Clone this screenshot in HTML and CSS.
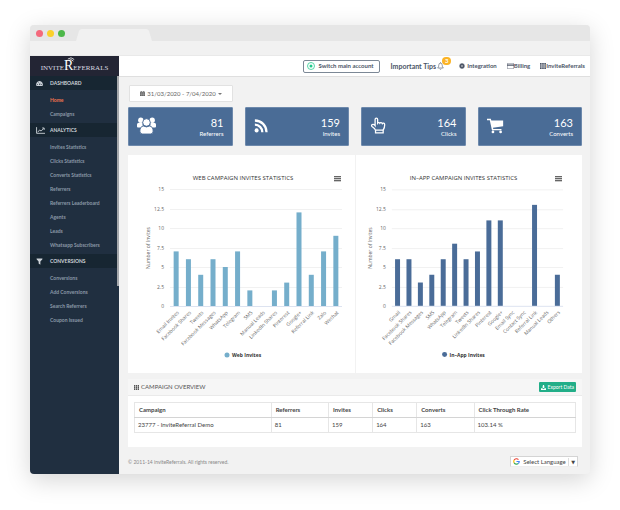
FILE: index.html
```html
<!DOCTYPE html>
<html lang="en">
<head>
<meta charset="utf-8">
<title>InviteReferrals</title>
<link rel="stylesheet" href="styles.css">
</head>
<body>
<div class="window">
  <div class="tabs">
    <span class="dot dot-red"></span><span class="dot dot-yellow"></span><span class="dot dot-green"></span>
    <svg class="tab" viewBox="0 0 76 12" preserveAspectRatio="none"><path d="M0 12 L3 2 Q4 0 6 0 H70 Q72 0 73 2 L76 12Z"/></svg>
  </div>
  <div class="toolbar"></div>
  <div class="app">
    <aside class="sidebar">
      <div class="logo">
        <span>INVITE</span><span class="logo-r">R<svg class="waves" viewBox="0 0 10 6"><path d="M1 2.5Q5-1 9 3M2.5 4.2Q5 1.7 8 5"/></svg></span><span>EFERRALS</span>
      </div>
      <nav class="menu">
        <h2 class="band"><svg class="icon" viewBox="0 0 14 12"><path d="M7 1a7 7 0 0 0-6 10h12A7 7 0 0 0 7 1z"/><path class="cut" d="M6.2 9l2-5 .4 5zM2.5 7h1.5v1.4H2.5zM4 3.8h1.3v1.4H4zM10 7h1.5v1.4H10z"/></svg>DASHBOARD</h2>
        <ul>
          <li><a class="active" href="#">Home</a></li>
          <li><a href="#">Campaigns</a></li>
        </ul>
        <h2 class="band"><svg class="icon icon-wide" viewBox="0 0 16 12"><path class="line" d="M1 0v11h15M3 9l3.5-4L9 7l5-5M11 1.5h3.5V5"/></svg>ANALYTICS</h2>
        <ul>
          <li><a href="#">Invites Statistics</a></li>
          <li><a href="#">Clicks Statistics</a></li>
          <li><a href="#">Converts Statistics</a></li>
          <li><a href="#">Referrers</a></li>
          <li><a href="#">Referrers Leaderboard</a></li>
          <li><a href="#">Agents</a></li>
          <li><a href="#">Leads</a></li>
          <li><a href="#">Whatsapp Subscribers</a></li>
        </ul>
        <h2 class="band"><svg class="icon" viewBox="0 0 12 12"><path d="M1 1h10v1.2L7.5 6v5.5l-3-2V6L1 2.200z"/></svg>CONVERSIONS</h2>
        <ul>
          <li><a href="#">Conversions</a></li>
          <li><a href="#">Add Conversions</a></li>
          <li><a href="#">Search Referrers</a></li>
          <li><a href="#">Coupon Issued</a></li>
        </ul>
        <span class="scrollbar"></span>
      </nav>
    </aside>
    <div class="main">
      <header class="topbar">
        <button class="switch" type="button"><svg viewBox="0 0 16 16"><circle class="ring" cx="8" cy="8" r="7"/><circle cx="8" cy="8" r="3"/></svg>Switch main account</button>
        <a class="tips" href="#">Important Tips<span class="bell"><svg viewBox="0 0 12 14"><path d="M1 10.500Q3 9 3 5.500Q3 2 6 2T9 5.500Q9 9 11 10.500zM6 2V.5M4.500 12q1.500 1.800 3 0"/></svg><span class="badge">3</span></span></a>
        <a class="link-integration" href="#"><svg class="small" viewBox="0 0 16 16"><circle class="gear" cx="8" cy="8" r="4"/><path class="teeth" d="M8 0v3M8 13v3M0 8h3M13 8h3M2.300 2.300l2.200 2.200M11.500 11.500l2.200 2.200M2.300 13.700l2.200-2.200M11.500 4.500l2.200-2.200"/></svg>Integration</a>
        <a class="link-billing" href="#"><svg class="card-icon" viewBox="0 0 14 12"><path class="card-line" d="M.5.5h13v11H.5z"/><path d="M0 3h14v2.500H0z"/></svg>Billing</a>
        <a href="#"><svg class="small" viewBox="0 0 12 12"><path d="M0 0h3.300v3.300H0zM4.300 0h3.300v3.300H4.300zM8.600 0h3.300v3.300H8.600zM0 4.300h3.300v3.300H0zM4.300 4.300h3.300v3.300H4.300zM8.600 4.300h3.300v3.300H8.600zM0 8.600h3.300v3.300H0zM4.300 8.600h3.300v3.300H4.300zM8.600 8.600h3.300v3.300H8.600z"/></svg>InviteReferrals</a>
      </header>
      <main class="content">
        <button class="date" type="button"><svg viewBox="0 0 12 12"><path d="M0 2h2V0h2v2h4V0h2v2h2v10H0z"/><path class="grid" d="M0 4.500h12M0 8h12M4 4v8M8 4v8"/></svg>31/03/2020 - 7/04/2020<i class="caret"></i></button>
        <section class="stats">
          <div class="stat"><svg viewBox="0 0 20 20"><circle cx="4" cy="4.500" r="2.800"/><circle cx="16" cy="4.500" r="2.800"/><path d="M0 11V9q0-2 2-2h4q-1 3 1 5H1q-1 0-1-1zM20 11V9q0-2-2-2h-4q1 3-1 5h6q1 0 1-1z"/><circle class="edge" cx="10" cy="6.800" r="4"/><path class="edge" d="M3 16q0-5 4-5.500 3 2 6 0 4 .5 4 5.500 0 3-3 3H6q-3 0-3-3z"/></svg><p><b>81</b>Referrers</p></div>
          <div class="stat"><svg class="icon-rss" viewBox="0 0 16 16"><circle cx="3" cy="13" r="2.300"/><path class="arc" d="M1 6.500A8.500 8.500 0 0 1 9.500 15M1 1.700A13.300 13.300 0 0 1 14.300 15"/></svg><p><b>159</b>Invites</p></div>
          <div class="stat"><svg class="icon-hand" viewBox="0 0 20 20"><path class="hand" d="M6.500 15.500v3.200h9v-3.200c1.200-2 1.800-4 1.800-6.500 0-1.800-2-2.300-2.800-1.200C14 6.500 12 6.300 11.500 7.300 11 6.400 9.400 6.300 9 7V2.800C9 .8 6 .8 6 2.800V10C4.500 8 1.800 8.300 1.800 10.200c0 1.500 3.200 2.300 4.700 5.300z"/><path class="hand" d="M6.500 15.500h9"/></svg><p><b>164</b>Clicks</p></div>
          <div class="stat"><svg class="icon-cart" viewBox="0 0 20 20"><path d="M0 2h4.500l.6 2H19v7L7 12.500l.4 1.500H17v1.700H5.800L3.300 3.700H0z"/><circle cx="7" cy="17.500" r="1.600"/><circle cx="16" cy="17.500" r="1.600"/></svg><p><b>163</b>Converts</p></div>
        </section>
        <section class="charts">
          <figure class="chart" id="web-chart"><button type="button" class="burger" aria-label="Chart menu"></button></figure>
          <figure class="chart" id="app-chart"><button type="button" class="burger" aria-label="Chart menu"></button></figure>
        </section>
        <section class="overview">
          <div class="overview-head">
            <h3><svg viewBox="0 0 12 12"><path d="M0 0h3v3.300H0zM4.500 0h3v3.300h-3zM9 0h3v3.300H9zM0 4.300h3v3.300H0zM4.500 4.300h3v3.300h-3zM9 4.300h3v3.300H9zM0 8.600h3V12H0zM4.500 8.600h3V12h-3zM9 8.600h3V12H9z"/></svg>CAMPAIGN OVERVIEW</h3>
            <button type="button" class="export"><svg viewBox="0 0 12 12"><path d="M4.500 0h3v4H10L6 8 2 4h2.500zM0 8h3l3 2 3-2h3v4H0z"/></svg>Export Data</button>
          </div>
          <div class="overview-body">
            <table>
              <colgroup><col class="c1"><col class="c2"><col class="c3"><col class="c4"><col class="c5"><col></colgroup>
              <thead><tr><th>Campaign</th><th>Referrers</th><th>Invites</th><th>Clicks</th><th>Converts</th><th>Click Through Rate</th></tr></thead>
              <tbody><tr><td>23777 - InviteReferral Demo</td><td>81</td><td>159</td><td>164</td><td>163</td><td>103.14 %</td></tr></tbody>
            </table>
          </div>
        </section>
        <footer class="footer">
          <span>© 2011-14 inviteReferrals. All rights reserved.</span>
          <label class="language"><svg viewBox="0 0 18 18"><path class="g-red" d="M3 5.500A7 7 0 0 1 14 4"/><path class="g-yellow" d="M3 5.500a7 7 0 0 0 0 7"/><path class="g-green" d="M3 12.500a7 7 0 0 0 10.500 1.800"/><path class="g-blue" d="M9 9h7q0 3.500-2.500 5.300"/></svg><select aria-label="Select Language"><option>Select Language</option></select><i class="arrow">▼</i></label>
        </footer>
      </main>
    </div>
  </div>
</div>
<script src="charts.js"></script>
</body>
</html>
```
FILE: styles.css
```css
* { box-sizing: border-box; }
body {
  margin: 0;
  min-height: 100vh;
  padding: 25px 30px 36px;
  display: flex;
  background: #fff;
  font: 6px/10px Lato, "Liberation Sans", sans-serif;
  color: #444;
}
h2, h3, p, ul, figure { margin: 0; padding: 0; font: inherit; }
ul { list-style: none; }
a { color: inherit; text-decoration: none; }
button, select { font: inherit; color: inherit; margin: 0; }
svg { fill: currentColor; flex: none; }

.window {
  flex: 1;
  min-width: 0;
  display: flex;
  flex-direction: column;
  border-radius: 4px;
  overflow: hidden;
  background: #f2f2f2;
  box-shadow: 0 6px 24px rgba(0, 0, 0, .17);
}
.tabs { display: flex; align-items: center; gap: 4px; height: 16px; padding-left: 6px; background: #e6e6e6; }
.dot { width: 7px; height: 7px; border-radius: 50%; }
.dot-red { background: #f4697c; }
.dot-yellow { background: #fbd02b; }
.dot-green { background: #4cb749; }
.tab { align-self: flex-end; width: 76px; height: 12px; margin-left: 7px; fill: #f1f1f1; }
.toolbar { height: 15px; background: #f1f1f1; border-bottom: 1px solid #e9e9e9; }
.app { flex: 1; display: flex; }

.sidebar { width: 89px; display: flex; flex-direction: column; background: #202f40; color: #8b99a7; }
.logo {
  display: flex;
  align-items: baseline;
  justify-content: center;
  height: 20px;
  background: #232534;
  color: #dcdce2;
  font: 7px/20px "Liberation Serif", serif;
}
.logo-r { position: relative; font-size: 14px; color: #fff; }
.waves { position: absolute; top: 1px; left: 3px; width: 8px; height: 5px; fill: none; stroke: #fff; stroke-width: 1; }
.menu { position: relative; flex: 1; font-size: 5px; font-weight: 700; }
.band {
  display: flex;
  align-items: center;
  height: 14px;
  padding-left: 6px;
  background: #172632;
  color: #ccd2d8;
}
.icon { width: 7px; height: 7px; margin-right: 7px; }
.icon-wide { width: 9px; margin-right: 5px; }
.cut { fill: #172632; }
.line { fill: none; stroke: currentColor; stroke-width: 1.6; }
.menu ul { padding: 3px 0 2px 20px; }
.menu li { line-height: 14px; }
.active { color: #f0734f; }
.scrollbar { position: absolute; top: 0; right: 0; width: 2px; height: 210px; background: #a6a8ab; }

.main { flex: 1; min-width: 0; display: flex; flex-direction: column; }
.topbar {
  display: flex;
  align-items: center;
  justify-content: flex-end;
  height: 21px;
  padding-right: 5px;
  background: #fff;
  border-bottom: 1px solid #dfdfdf;
  color: #4c5566;
  font-weight: 700;
}
.topbar a { display: flex; align-items: center; }
.topbar .tips { margin: 0 8px 0 11px; font-size: 7px; }
.topbar .link-integration { margin-right: 10px; }
.topbar .link-billing { margin-right: 10px; }
.switch {
  display: flex;
  align-items: center;
  gap: 3px;
  height: 13px;
  padding: 0 5px 0 3px;
  background: #fff;
  border: 1px solid #7c8896;
  border-radius: 2px;
}
.switch svg { width: 8px; height: 8px; fill: #1fc98b; }
.switch .ring { fill: none; stroke: #1fc98b; stroke-width: 1.5; }
.bell { position: relative; width: 14px; height: 8px; margin-left: 1px; }
.bell svg { display: block; width: 7px; height: 8px; fill: none; stroke: currentColor; }
.badge {
  position: absolute;
  top: -5px;
  left: 5px;
  width: 9px;
  border-radius: 4px;
  background: #fbb324;
  color: #fff;
  font-size: 6px;
  line-height: 8px;
  text-align: center;
}
.small { width: 6px; height: 6px; }
.link-integration .small { margin-right: 2px; }
.gear { fill: none; stroke: currentColor; stroke-width: 4; }
.teeth { fill: none; stroke: currentColor; stroke-width: 3; }
.card-icon { width: 7px; height: 6px; }
.card-line { fill: none; stroke: currentColor; }

.content { flex: 1; display: flex; flex-direction: column; padding: 8px 8px 7px 9px; }
.date {
  align-self: flex-start;
  display: flex;
  align-items: center;
  justify-content: center;
  width: 104px;
  height: 17px;
  margin-left: 1px;
  padding: 0;
  background: #fff;
  border: 1px solid #e2e2e2;
  border-radius: 1px;
  color: #666;
}
.date svg { width: 5px; height: 5px; margin-right: 2px; }
.grid { fill: none; stroke: #ddd; stroke-width: .6; }
.caret { margin-left: 2px; border: 2px solid transparent; border-top-color: #777; border-bottom: 0; }
.stats { display: grid; grid-template-columns: repeat(4, 1fr); gap: 12px; margin-top: 5px; }
.stat {
  display: flex;
  align-items: center;
  justify-content: space-between;
  height: 39px;
  padding: 2px 8px 0;
  background: #4a6c96;
  border: 1px solid #6d89ac;
  border-radius: 1px;
  color: #fff;
}
.stat svg { width: 19px; height: 19px; margin-bottom: 4px; }
.stat .icon-rss { width: 14px; height: 14px; }
.stat .icon-hand, .stat .icon-cart { width: 17px; height: 17px; }
.stat p { text-align: right; }
.stat b { display: block; font-size: 11px; font-weight: 400; line-height: 12px; }
.edge { stroke: #4a6c96; stroke-width: 1; }
.arc { fill: none; stroke: #fff; stroke-width: 2.600; }
.hand { fill: none; stroke: #fff; stroke-width: 1.500; }

.charts { display: grid; grid-template-columns: 1fr 1fr; margin-top: 9px; background: #fff; }
.chart { position: relative; display: flex; font-family: "Open Sans", sans-serif; }
.chart + .chart { border-left: 1px solid #f2f2f2; }
.chart svg { width: 100%; height: auto; }
.burger {
  position: absolute;
  top: 21px;
  right: 14px;
  width: 7px;
  height: 6px;
  padding: 0;
  border: 0;
  background: repeating-linear-gradient(#666 0 1px, #ccc 1px 2px);
}
.chart + .chart .burger { right: 20px; }
.title { font-size: 6px; fill: #333; text-anchor: middle; }
.rule { stroke: #f1f1f1; }
.axis { stroke: #dde3f0; }
.tick { font-size: 5px; fill: #666; text-anchor: end; }
.y-title { font-size: 5px; fill: #666; text-anchor: middle; }
.legend { font-size: 5px; font-weight: 700; fill: #333; }
.web { fill: #75aecb; }
.inapp { fill: #4a6c98; }

.overview { margin-top: 6px; background: #fff; }
.overview-head {
  display: flex;
  align-items: center;
  justify-content: space-between;
  height: 17px;
  padding: 0 6px;
  background: #f6f6f6;
  border-bottom: 1px solid #eaeaea;
}
.overview-head h3 { display: flex; align-items: center; gap: 2px; color: #555; }
.overview-head h3 svg { width: 5px; height: 5px; }
.export {
  display: flex;
  align-items: center;
  gap: 2px;
  height: 10px;
  padding: 0 2px;
  border: 0;
  border-radius: 1px;
  background: #22ae88;
  color: #fff;
  font-size: 5px;
}
.export svg { width: 5px; height: 5px; }
.overview-body { padding: 6px 6px 14px; }
table { width: 100%; table-layout: fixed; border-collapse: collapse; }
.c1 { width: 31%; }
.c2 { width: 13%; }
.c3, .c4 { width: 10%; }
.c5 { width: 13%; }
th, td { height: 15px; padding: 0 3px; border: 1px solid #e6e6e6; text-align: left; line-height: 10px; white-space: nowrap; }
th { padding: 0 4px; border-bottom: 1px solid #d4d4d4; }
.footer { display: flex; align-items: center; justify-content: space-between; margin-top: auto; padding-right: 4px; color: #888; font-size: 5px; }
.language {
  display: flex;
  align-items: center;
  height: 11px;
  padding: 0 2px;
  background: #fff;
  border: 1px solid #d4d4d4;
  border-bottom-color: #eee;
  color: #444;
  font-size: 6px;
}
.language svg { width: 7px; height: 7px; margin-right: 3px; fill: none; stroke-width: 3; }
.language select { appearance: none; padding: 0; border: 0; background: none; }
.arrow { margin-left: 2px; padding-left: 2px; border-left: 1px solid #ddd; font: 5px/8px "DejaVu Sans", sans-serif; }
.g-red { stroke: #ea4335; }
.g-yellow { stroke: #fbbc05; }
.g-green { stroke: #34a853; }
.g-blue { stroke: #4285f4; }
```
FILE: charts.js
```js
const NS = 'http://www.w3.org/2000/svg';

function add(parent, tag, attrs, text) {
  const node = document.createElementNS(NS, tag);
  for (const key in attrs) node.setAttribute(key, attrs[key]);
  if (text !== undefined) node.textContent = text;
  parent.appendChild(node);
  return node;
}

function drawChart(id, o) {
  const top = 34, base = 151, right = o.left + 172;
  const svg = add(document.getElementById(id), 'svg', { viewBox: '0 0 227 218' });
  add(svg, 'text', { class: 'title', x: o.titleX, y: 25 }, o.title);
  for (let v = 0; v <= 15; v += 2.5) {
    const y = Math.round(base - v * (base - top) / 15) + 0.5;
    add(svg, 'line', { class: v ? 'rule' : 'axis', x1: o.left, x2: right, y1: y, y2: y });
    add(svg, 'text', { class: 'tick', x: o.left - 6, y: y + 1.5 }, v);
  }
  add(svg, 'text', { class: 'y-title', transform: `translate(${o.left - 20} 93) rotate(-90)` }, 'Number of Invites');
  const step = 172 / o.data.length;
  o.data.forEach(([name, value], i) => {
    const x = o.left + step * (i + 0.5);
    const h = value * (base - top) / 15;
    add(svg, 'rect', { class: o.series, x: x - 2.5, y: base - h, width: 5, height: h });
    add(svg, 'text', { class: 'tick', transform: `translate(${x + 3} 158) rotate(-45)` }, name);
  });
  add(svg, 'circle', { class: o.series, cx: o.legendX, cy: 200, r: 2.5 });
  add(svg, 'text', { class: 'legend', x: o.legendX + 5, y: 202 }, o.legend);
}

drawChart('web-chart', {
  title: 'WEB CAMPAIGN INVITES STATISTICS', titleX: 115, left: 42, series: 'web', legend: 'Web Invites', legendX: 99,
  data: [['Email Invites', 7], ['Facebook Shares', 6], ['Tweets', 4], ['Facebook Messages', 6], ['WhatsApp', 5],
    ['Telegram', 7], ['SMS', 2], ['Manual Leads', 0], ['LinkedIn Shares', 2], ['Pinterest', 3], ['Google+', 12],
    ['Referral Link', 4], ['Zalo', 7], ['Wechat', 9]]
});
drawChart('app-chart', {
  title: 'IN–APP CAMPAIGN INVITES STATISTICS', titleX: 108, left: 36, series: 'inapp', legend: 'In–App Invites', legendX: 89,
  data: [['Gmail', 6], ['Facebook Shares', 6], ['Facebook Messages', 3], ['SMS', 4], ['WhatsApp', 6],
    ['Telegram', 8], ['Tweets', 6], ['LinkedIn Shares', 7], ['Pinterest', 11], ['Google+', 11], ['Email Sync', 0],
    ['Contact Sync', 0], ['Referral Link', 13], ['Manual Leads', 0], ['Others', 4]]
});
```
